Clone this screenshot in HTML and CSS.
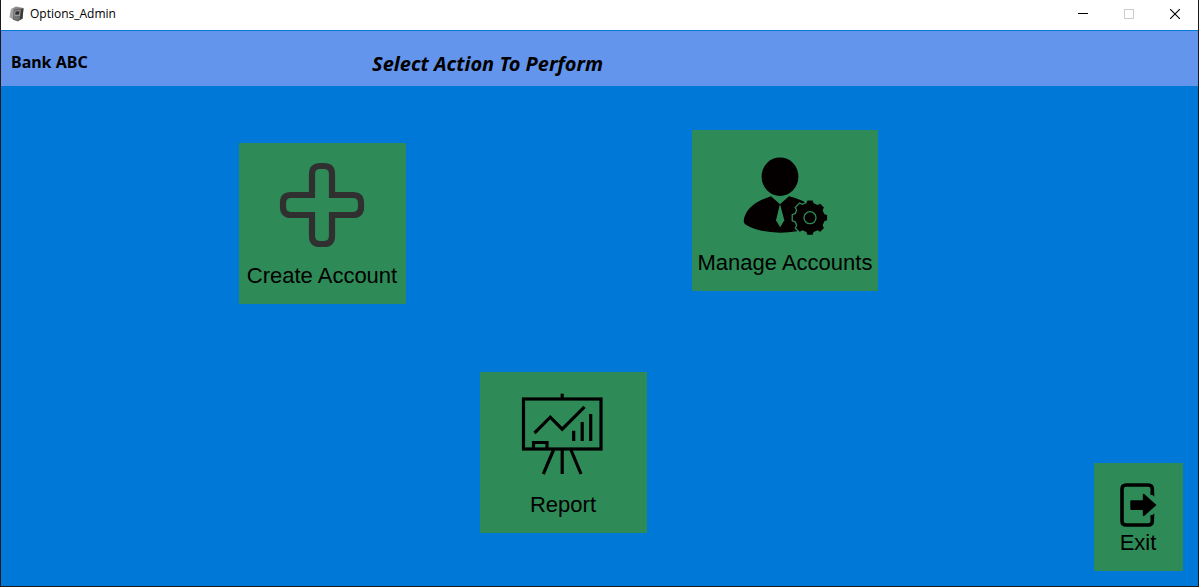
FILE: index.html
```html
<!DOCTYPE html>
<html lang="en">
<head>
<meta charset="utf-8">
<title>Options_Admin</title>
<link rel="stylesheet" href="styles.css">
</head>
<body>
<div class="window">
  <div class="titlebar">
    <svg class="app-icon" viewBox="0 0 16 16" aria-hidden="true">
      <path d="M2 3 L7 0.5 L14.5 2 L9 4.5 Z" fill="#8d8d8d"/>
      <path d="M2 3 L5 3.5 L4.5 14 L0.5 11 Z" fill="#a2a2a2"/>
      <path d="M4.5 3.2 L14.5 2 L13.5 12.5 L9 15.5 L4 13.8 Z" fill="#666"/>
      <path d="M5.500 4.500 L11.500 4.200 L11 10 L5.200 10.500 Z" fill="#999"/>
      <path d="M6.500 5.500 L10.500 5.300 L10 8.500 L6.300 8.700 Z" fill="#2b2b2b"/>
      <path d="M12 4 L14.500 2.200 L13.500 12.500 L11 14 Z" fill="#393939"/>
      <path d="M5 11.500 L10 11.500 L9 13.500 L5 13 Z" fill="#7b7b7b"/>
    </svg>
    <span class="caption">Options_Admin</span>
    <button class="win-btn" type="button" aria-label="Minimize"><svg viewBox="0 0 10 10"><path d="M0 4.500H10" stroke="#000"/></svg></button>
    <button class="win-btn" type="button" aria-label="Maximize" disabled><svg viewBox="0 0 10 10"><rect x=".5" y=".5" width="9" height="9" fill="none" stroke="#ccc"/></svg></button>
    <button class="win-btn" type="button" aria-label="Close"><svg viewBox="0 0 10 10"><path d="M0 0L10 10M10 0L0 10" stroke="#000" stroke-width="1.1"/></svg></button>
  </div>
  <header class="header">
    <span class="brand">Bank ABC</span>
    <h1 class="heading">Select Action To Perform</h1>
  </header>
  <main class="actions">
    <button class="tile create" type="button">
      <svg class="icon" viewBox="0 0 84 84" aria-hidden="true">
        <path d="M32 32V11Q32 3 40 3H44Q52 3 52 11V32H73Q81 32 81 40V44Q81 52 73 52H52V73Q52 81 44 81H40Q32 81 32 73V52H11Q3 52 3 44V40Q3 32 11 32Z" fill="none" stroke="#303030" stroke-width="6.2"/>
      </svg>
      <span>Create Account</span>
    </button>
    <button class="tile manage" type="button">
      <svg class="icon" viewBox="0 0 84 84" aria-hidden="true">
        <defs>
          <path id="tooth" d="M63.2 54L64.4 50.6H69.6L70.8 54V60H63.2Z"/>
          <g id="gear">
            <circle cx="67" cy="67.7" r="14.6"/>
            <use href="#tooth"/>
            <use href="#tooth" transform="rotate(45 67 67.7)"/>
            <use href="#tooth" transform="rotate(90 67 67.7)"/>
            <use href="#tooth" transform="rotate(135 67 67.7)"/>
            <use href="#tooth" transform="rotate(180 67 67.7)"/>
            <use href="#tooth" transform="rotate(225 67 67.7)"/>
            <use href="#tooth" transform="rotate(270 67 67.7)"/>
            <use href="#tooth" transform="rotate(315 67 67.7)"/>
          </g>
        </defs>
        <ellipse cx="37" cy="26.7" rx="18.4" ry="19.3" fill="#050000"/>
        <path d="M28 46.3L37 54.3L46 46.3Q54 48 61 51.5L70 68L54 81.3Q46 82.7 37 82.7Q14 82 2.5 74.5Q0.3 73 0.8 70Q3.5 54 28 46.3Z" fill="#050000"/>
        <path d="M37 54L33 70.3L37.2 77.3L41.3 70.3Z" fill="#2e8b57"/>
        <use href="#gear" fill="#2e8b57" stroke="#2e8b57" stroke-width="2.6"/>
        <use href="#gear" fill="#050000"/>
        <circle cx="67" cy="67.7" r="6" fill="none" stroke="#2e8b57" stroke-width="1.3"/>
      </svg>
      <span>Manage Accounts</span>
    </button>
    <button class="tile report" type="button">
      <svg class="icon" viewBox="0 0 84 84" aria-hidden="true">
        <g fill="none" stroke="#000" stroke-width="3.2">
          <rect x="2.5" y="7" width="77.5" height="50"/>
          <path d="M41.2 1.7V7"/>
          <path d="M13.5 41L29.3 25.2L41.2 37.2L63.5 14.8"/>
          <path d="M52.7 38.7V49M61.2 30V49M69.7 22V49"/>
          <path d="M12.5 57V50.5H26V57"/>
          <path d="M32.5 58L22.3 82M41.2 58V82M50 58L60 82"/>
        </g>
      </svg>
      <span>Report</span>
    </button>
    <button class="tile exit" type="button">
      <svg class="icon" viewBox="0 0 36 44" aria-hidden="true">
        <path d="M32.3 12V6Q32.3 2 28.3 2H6Q2 2 2 6V38Q2 42 6 42H28.3Q32.3 42 32.3 38V32" fill="none" stroke="#000" stroke-width="3.6"/>
        <path d="M30 9.5L34.2 13.7V9.5ZM30 34.5L34.2 30.3V34.5Z"/>
        <path d="M11.3 17.2H22.8V11.5Q23.3 10.3 24.5 11.3L36.5 22L24.5 32.7Q23.3 33.7 22.8 32.5V27H11.3Q10.3 27 10.3 26V18.2Q10.3 17.2 11.3 17.2Z"/>
      </svg>
      <span>Exit</span>
    </button>
  </main>
</div>
</body>
</html>
```
FILE: styles.css
```css
* {
  box-sizing: border-box;
}

body {
  margin: 0;
}

.window {
  display: flex;
  flex-direction: column;
  min-height: 100vh;
  border: 1px solid #1a1a1a;
  border-top: 0;
  background: #0078d7;
  color: #000;
}

.titlebar {
  display: flex;
  align-items: center;
  height: 31px;
  padding: 0 0 2px 8px;
  border-bottom: 1px solid #0078d7;
  background: #fff;
  font: 12px/28px "Open Sans", "Noto Sans", sans-serif;
}

.app-icon {
  width: 16px;
  height: 16px;
  margin-right: 5px;
}

.caption {
  flex: 1;
}

.win-btn {
  display: flex;
  align-items: center;
  justify-content: center;
  width: 46px;
  height: 28px;
  padding: 0;
  border: 0;
  background: none;
}

.win-btn svg {
  width: 10px;
  height: 10px;
}

.header {
  display: grid;
  grid-template-columns: 31fr 69fr;
  align-items: center;
  height: 55px;
  padding-top: 6px;
  background: #6495ed;
  font-family: "Noto Sans", "Open Sans", sans-serif;
}

.brand {
  padding-left: 10px;
  font-size: 16px;
  font-weight: 700;
}

.heading {
  margin: 0;
  padding-top: 3px;
  font-size: 20px;
  font-style: italic;
  font-weight: 700;
}

.actions {
  flex: 1;
  display: grid;
  grid-template-columns: 238fr auto 74fr auto 45fr auto 216fr auto;
  grid-template-rows: auto 1fr;
  row-gap: 68px;
  align-items: start;
  padding: 44px 15px 15px 0;
}

.tile {
  display: flex;
  flex-direction: column;
  align-items: center;
  gap: 17px;
  width: 167px;
  padding: 20px 1px 16px 0;
  border: 0;
  background: #2e8b57;
  color: #000;
  font: 22px/24px "Liberation Sans", Arial, sans-serif;
  white-space: nowrap;
}

.icon {
  width: 84px;
  height: 84px;
  overflow: visible;
}

.create {
  grid-area: 1 / 2;
  margin-top: 13px;
}

.manage {
  grid-area: 1 / 6;
  width: 186px;
  padding-right: 0;
}

.report {
  grid-area: 2 / 4;
}

.exit {
  grid-area: 2 / 8;
  align-self: end;
  gap: 4px;
  width: 89px;
}

.exit .icon {
  width: 36px;
  height: 44px;
}
```
